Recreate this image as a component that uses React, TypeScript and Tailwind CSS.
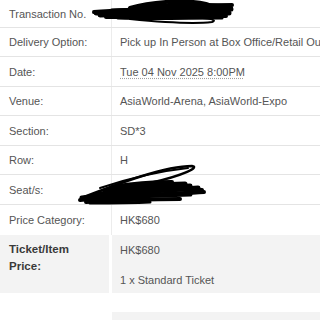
import React from "react";

const rows: { label: string; value: string; h: string; underline?: boolean }[] = [
  { label: "Transaction No.", value: "", h: "h-[28px]" },
  { label: "Delivery Option:", value: "Pick up In Person at Box Office/Retail Outlet", h: "h-[29px]" },
  { label: "Date:", value: "Tue 04 Nov 2025 8:00PM", h: "h-[30px]", underline: true },
  { label: "Venue:", value: "AsiaWorld-Arena, AsiaWorld-Expo", h: "h-[29px]" },
  { label: "Section:", value: "SD*3", h: "h-[30px]" },
  { label: "Row:", value: "H", h: "h-[29px]" },
  { label: "Seat/s:", value: "", h: "h-[30px]" },
];

export default function App() {
  return (
    <div
      className="relative w-[320px] h-[320px] overflow-hidden bg-white text-[11px] text-[#555555]"
      style={{ fontFamily: '"Liberation Sans", Arial, Helvetica, sans-serif' }}
    >
      <div className="flex flex-col">
        {rows.map((r) => (
          <div key={r.label} className={`flex ${r.h} border-b border-[#e4e4e4]`}>
            <div className="w-[112px] shrink-0 flex items-center pl-[9px] border-r border-[#ececec] pt-[1px]">
              {r.label}
            </div>
            <div className="flex-1 flex items-center pl-[8px] whitespace-nowrap overflow-hidden pt-[1px]">
              {r.underline ? (
                <span className="underline decoration-dotted decoration-[#a0a0a0] underline-offset-2">{r.value}</span>
              ) : (
                r.value
              )}
            </div>
          </div>
        ))}
        <div className="flex h-[30px]">
          <div className="w-[112px] shrink-0 flex items-center pl-[9px] border-r border-[#ececec]">
            Price Category:
          </div>
          <div className="flex-1 flex items-center pl-[8px]">HK$680</div>
        </div>
        <div className="flex h-[58px]">
          <div className="w-[109px] shrink-0 bg-[#f3f3f3] pl-[9px] pt-[6px] font-bold text-[#3a3a3a] text-[11.5px] leading-[17px]">
            Ticket/Item
            <br />
            Price:
          </div>
          <div className="w-[3px] shrink-0 bg-white" />
          <div className="flex-1 bg-[#f3f3f3] pl-[8px] pt-[7px] leading-[17px] flex flex-col">
            <span>HK$680</span>
            <span className="mt-[13px]">1 x Standard Ticket</span>
          </div>
        </div>
        <div className="h-[19px]" />
        <div className="flex h-[20px]">
          <div className="w-[112px] shrink-0" />
          <div className="flex-1 bg-[#f3f3f3]" />
        </div>
      </div>

      <svg
        className="absolute left-0 top-0 pointer-events-none"
        width="320"
        height="320"
        viewBox="0 0 320 320"
        fill="none"
        stroke="#000"
        strokeLinecap="round"
        strokeLinejoin="round"
      >
        {/* transaction no. scribble */}
        <path d="M94 12 C130 9 190 7 232 5" strokeWidth="4" />
        <path d="M96 13 C140 11 190 10 231 9" strokeWidth="5" />
        <path d="M100 15 C140 14 190 13 229 13" strokeWidth="5" />
        <path d="M106 17 C150 17 200 16 226 16" strokeWidth="4" />
        <path d="M118 18 C150 19 190 18 222 18" strokeWidth="3" />
        <path d="M130 19 C160 22 195 24 212 22 C218 20 210 18 190 17" strokeWidth="2" />
        <path d="M130 8 C150 2 185 -1 206 4 C215 6 200 7 180 8" strokeWidth="4" />
        <path d="M140 7 C170 4 200 5 230 6" strokeWidth="5" />
        <path d="M170 4 C190 7 205 10 220 12" strokeWidth="4" />
        <path d="M112 11 C150 10 200 10 225 11" strokeWidth="5" />

        {/* seat/s scribble */}
        <path d="M84 197 C120 183 165 166 192 166 C200 167 185 175 150 183 C130 188 110 192 95 194" strokeWidth="2.5" />
        <path d="M100 188 C130 178 160 171 188 168" strokeWidth="2" />
        <path d="M80 200 C120 196 170 194 204 192" strokeWidth="4" />
        <path d="M82 198 C120 193 165 190 198 188" strokeWidth="5" />
        <path d="M86 202 C120 200 160 199 180 199" strokeWidth="4" />
        <path d="M95 195 C130 190 160 188 190 186" strokeWidth="5" />
        <path d="M105 191 C135 187 160 184 185 184" strokeWidth="5" />
        <path d="M112 187 C130 184 150 182 172 182" strokeWidth="4" />
        <path d="M90 203 C110 203 130 203 150 202" strokeWidth="3" />
        <path d="M150 191 C170 189 190 188 202 190" strokeWidth="4" />
        <path d="M100 198 C130 196 160 195 190 194" strokeWidth="5" />
      </svg>
    </div>
  );
}
